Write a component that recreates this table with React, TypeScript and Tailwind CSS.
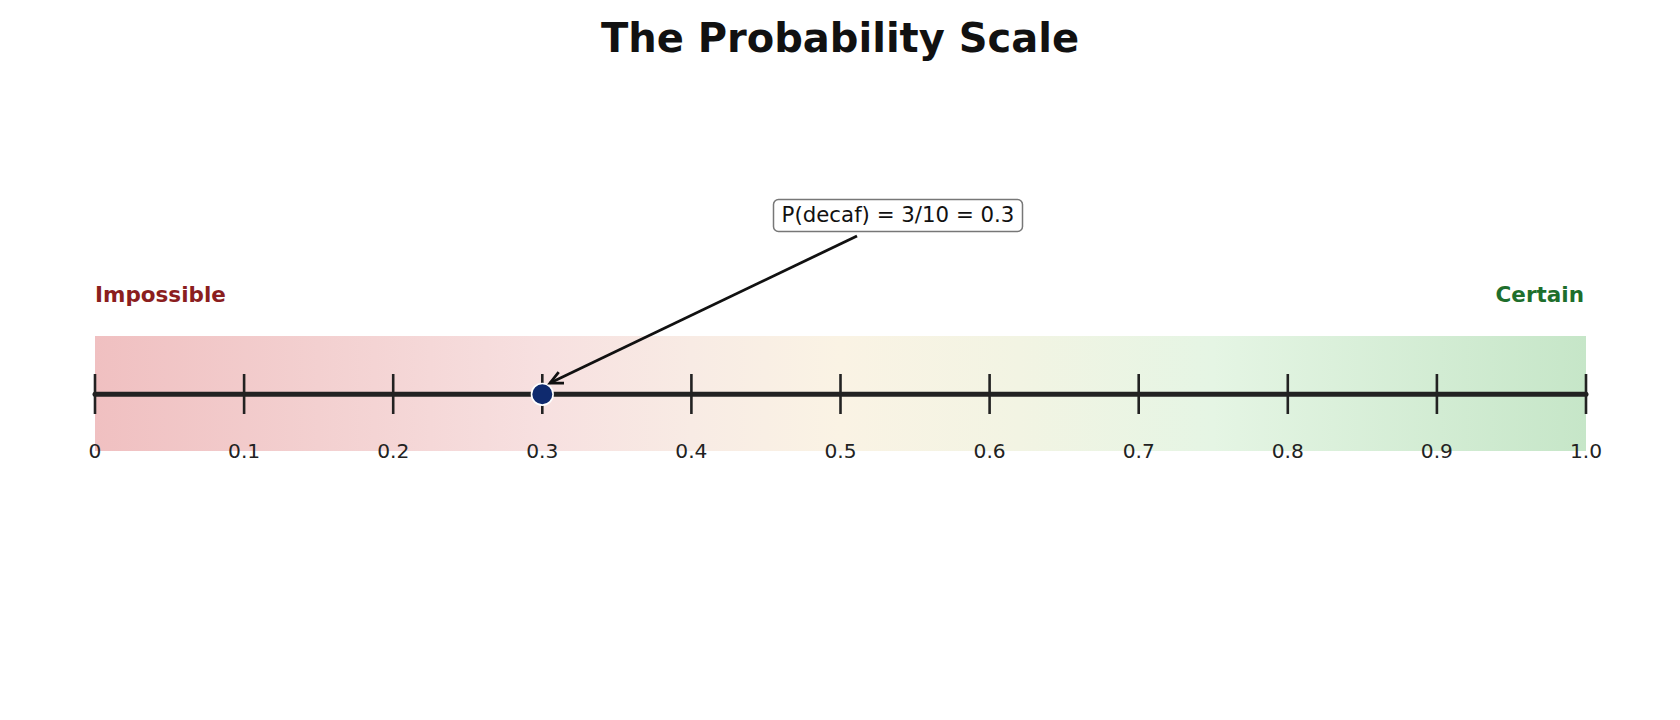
import React from "react";

const FONT = '"DejaVu Sans", "Liberation Sans", sans-serif';

// scale geometry, in page pixels
const X0 = 95;
const X1 = 1586;
const AXIS_Y = 394.3;
const STEP = (X1 - X0) / 10;

function xAt(p: number) {
  return X0 + (X1 - X0) * p;
}

function ArrowHead({ fromX, fromY, toX, toY }: { fromX: number; fromY: number; toX: number; toY: number }) {
  const len = Math.hypot(toX - fromX, toY - fromY);
  const ux = (fromX - toX) / len;
  const uy = (fromY - toY) / len;
  const head = 14;
  const ang = (26 * Math.PI) / 180;
  const rot = (a: number) => [ux * Math.cos(a) - uy * Math.sin(a), ux * Math.sin(a) + uy * Math.cos(a)];
  const [ax, ay] = rot(ang);
  const [bx, by] = rot(-ang);
  return (
    <path
      d={`M${toX + ax * head} ${toY + ay * head} L${toX} ${toY} L${toX + bx * head} ${toY + by * head}`}
      fill="none"
      stroke="#111111"
      strokeWidth={2.8}
      strokeLinejoin="miter"
    />
  );
}

export default function App() {
  const ticks = Array.from({ length: 11 }, (_, i) => i);
  const p = 0.3;
  const arrow = { fromX: 857, fromY: 236, toX: 550, toY: 383 };

  return (
    <div className="flex h-[720px] w-[1680px] flex-col overflow-hidden bg-white" style={{ fontFamily: FONT }}>
      <h1 className="pt-[18px] text-center text-[40px] font-bold leading-none text-[#111111]">
        The Probability Scale
      </h1>

      <svg className="block flex-1" width={1680} viewBox="0 58 1680 662" preserveAspectRatio="xMidYMin meet">
        <defs>
          <linearGradient id="band" x1="0" y1="0" x2="1" y2="0">
            <stop offset="0%" stopColor="#f0c0c1" />
            <stop offset="15%" stopColor="#f3d0d0" />
            <stop offset="30%" stopColor="#f7e0e0" />
            <stop offset="40%" stopColor="#f8ebe4" />
            <stop offset="50%" stopColor="#faf3e4" />
            <stop offset="62%" stopColor="#f2f4e3" />
            <stop offset="75%" stopColor="#e5f5e4" />
            <stop offset="100%" stopColor="#c6e6c8" />
          </linearGradient>
        </defs>

        <text x={X0} y={301.5} fontFamily={FONT} fontSize={21.5} fontWeight={700} fill="#8b1e1e">
          Impossible
        </text>
        <text x={X1 - 2} y={301.5} fontFamily={FONT} fontSize={21.5} fontWeight={700} fill="#1e6e2c" textAnchor="end">
          Certain
        </text>

        <rect x={X0} y={336} width={X1 - X0} height={115} fill="url(#band)" />

        <line x1={X0} y1={AXIS_Y} x2={X1} y2={AXIS_Y} stroke="#222222" strokeWidth={5} strokeLinecap="round" />

        {ticks.map((i) => (
          <g key={i}>
            <line x1={X0 + STEP * i} y1={374} x2={X0 + STEP * i} y2={414} stroke="#222222" strokeWidth={2.6} />
            <text
              x={X0 + STEP * i}
              y={457.5}
              fontFamily={FONT}
              fontSize={20.2}
              fill="#222222"
              textAnchor="middle"
            >
              {i === 0 ? "0" : i === 10 ? "1.0" : `0.${i}`}
            </text>
          </g>
        ))}

        <circle cx={xAt(p)} cy={AXIS_Y} r={10.8} fill="#0f2a6e" stroke="#ffffff" strokeWidth={1.6} />

        {/* annotation */}
        <line
          x1={arrow.fromX}
          y1={arrow.fromY}
          x2={arrow.toX}
          y2={arrow.toY}
          stroke="#111111"
          strokeWidth={2.8}
        />
        <ArrowHead {...arrow} />
        <rect x={773.5} y={199.5} width={249} height={32} rx={5} fill="#ffffff" stroke="#777777" strokeWidth={1.5} />
        <text x={898} y={221.5} fontFamily={FONT} fontSize={21.3} fill="#111111" textAnchor="middle">
          P(decaf) = 3/10 = 0.3
        </text>
      </svg>
    </div>
  );
}
